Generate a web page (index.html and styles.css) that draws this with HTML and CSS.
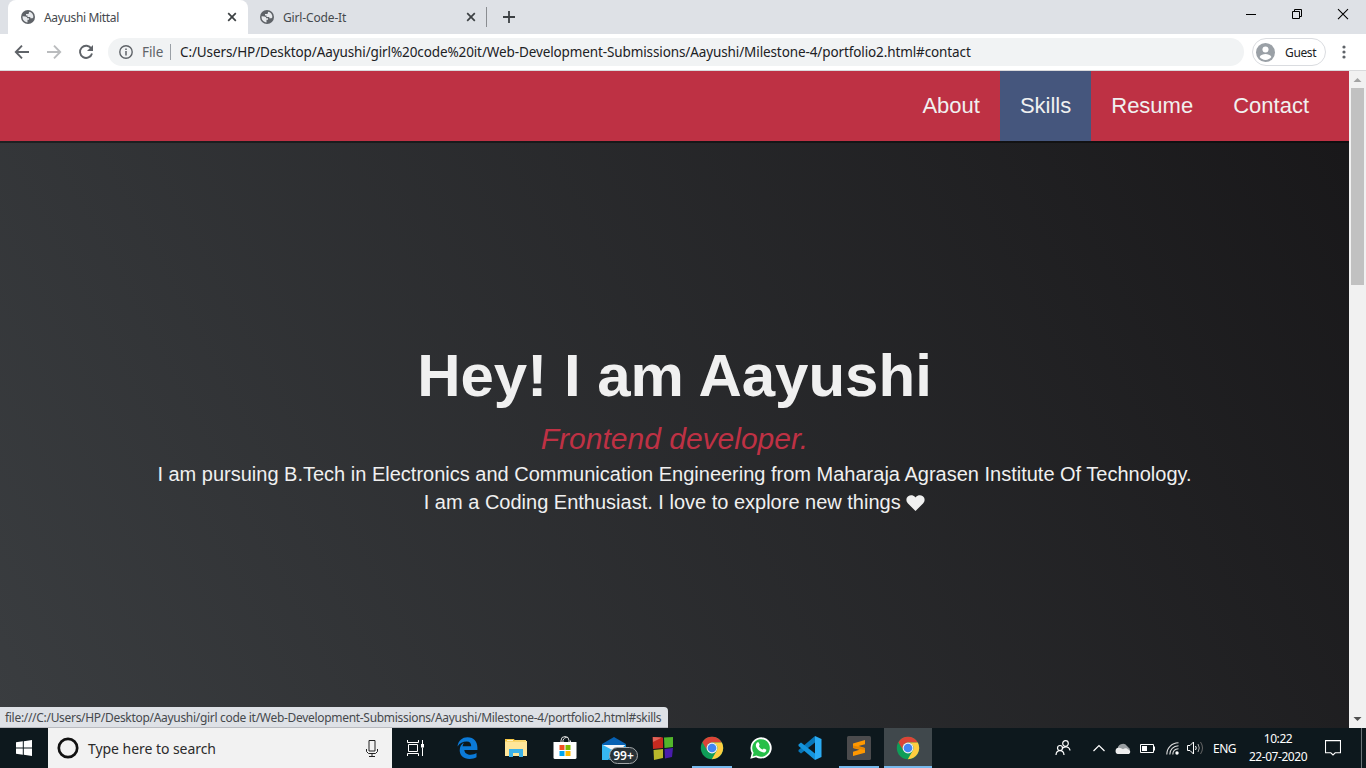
FILE: index.html
```html
<!DOCTYPE html>
<html lang="en">
<head>
<meta charset="utf-8">
<title>Aayushi Mittal</title>
<link rel="stylesheet" href="styles.css">
</head>
<body>
<svg class="defs" width="0" height="0" aria-hidden="true">
  <symbol id="globe" viewBox="0 0 14 14"><circle cx="7" cy="7" r="7" fill="#5f6368"/><path d="M1.600 6.300 4.500 6.400Q6.200 6.600 6.300 8.200H8V9.700H6.500V12.400C3.600 12.300 1.200 9.800 1.600 6.300ZM8 1.700C10.600 2 12.500 4.300 12.400 7.200L11.500 8.200H9.300V7.100H6.500V5.600H5V4.100H7.200L7.900 3.200Z" fill="#e8eaed"/></symbol>
  <symbol id="close" viewBox="0 0 10 10"><path d="M1.200 1.200l7.600 7.600M8.800 1.200 1.200 8.800" stroke="#3c4043" stroke-width="1.700"/></symbol>
  <symbol id="chrome" viewBox="0 0 24 24"><circle cx="12" cy="12" r="11.200" fill="#0f9d58"/><path d="M12 .8A11.200 11.200 0 0 1 21.800 6.600H12A5.400 5.400 0 0 0 7.300 14.700L2.400 6.200A11.200 11.200 0 0 1 12 .8Z" fill="#db4437"/><path d="M21.800 6.600A11.200 11.200 0 0 1 11.800 23.200L16.700 14.700A5.400 5.400 0 0 0 12 6.600Z" fill="#ffcd40"/><circle cx="12" cy="12" r="5.400" fill="#f1f1f1"/><circle cx="12" cy="12" r="4.300" fill="#4285f4"/></symbol>
</svg>
<div class="desktop">
  <header class="tabstrip">
    <div class="tab tab-active">
      <svg class="favicon"><use href="#globe"/></svg><span class="tab-title">Aayushi Mittal</span><svg class="tab-close"><use href="#close"/></svg>
    </div>
    <div class="tab">
      <svg class="favicon"><use href="#globe"/></svg><span class="tab-title tab-title-wide">Girl-Code-It</span><svg class="tab-close"><use href="#close"/></svg>
    </div>
    <div class="tab-divider"></div>
    <svg class="new-tab" viewBox="0 0 12 12"><path d="M6 0v12M0 6h12" stroke="#3c4043" stroke-width="1.800"/></svg>
    <div class="window-controls">
      <svg width="46" height="29" viewBox="0 0 46 29"><path d="M18 14.500h10" stroke="#000"/></svg>
      <svg width="46" height="29" viewBox="0 0 46 29"><path d="M18.500 11.500h7v7h-7zM20.500 11.500v-2h7v7h-2" fill="none" stroke="#000"/></svg>
      <svg width="46" height="29" viewBox="0 0 46 29"><path d="M18 9.200l10 10M28 9.200l-10 10" stroke="#000" stroke-width="1.100"/></svg>
    </div>
  </header>

  <div class="toolbar">
    <svg class="nav-icon" viewBox="0 0 16 16"><path d="M15 8H2M8 1.700 1.800 8 8 14.300" fill="none" stroke="#5f6368" stroke-width="1.900"/></svg>
    <svg class="nav-icon" viewBox="0 0 16 16"><path d="M1 8h13M8 1.700 14.200 8 8 14.300" fill="none" stroke="#babcbe" stroke-width="1.900"/></svg>
    <svg class="nav-icon" viewBox="0 0 16 16"><path d="M13.300 4.600A6.100 6.100 0 1 0 14 9.400" fill="none" stroke="#5f6368" stroke-width="1.900"/><path d="M15 1v6H9z" fill="#5f6368"/></svg>
    <div class="omnibox">
      <svg class="info" viewBox="0 0 14 14"><circle cx="7" cy="7" r="6.200" fill="none" stroke="#5f6368" stroke-width="1.400"/><path d="M7 6v4.500M7 3.400v1.500" stroke="#5f6368" stroke-width="1.500"/></svg>
      <span class="scheme">File</span><span class="scheme-line"></span>
      <span class="url">C:/Users/HP/Desktop/Aayushi/girl%20code%20it/Web-Development-Submissions/Aayushi/Milestone-4/portfolio2.html#contact</span>
    </div>
    <div class="profile">
      <svg width="19" height="19" viewBox="0 0 20 20"><circle cx="10" cy="10" r="10" fill="#9aa0a6"/><circle cx="10" cy="6.800" r="3.200" fill="#fff"/><path d="M3.800 14.800c1-2.400 4-3.200 6.200-3.200s5.200.8 6.200 3.200c-1.500 1.900-3.600 3-6.200 3s-4.700-1.100-6.200-3Z" fill="#fff"/></svg>
      <span>Guest</span>
    </div>
    <svg class="more" viewBox="0 0 4 14"><g fill="#5f6368"><circle cx="2" cy="2" r="1.600"/><circle cx="2" cy="7" r="1.600"/><circle cx="2" cy="12" r="1.600"/></g></svg>
  </div>

  <main class="viewport">
    <div class="page">
      <nav class="navbar">
        <a>About</a><a class="hovered">Skills</a><a>Resume</a><a>Contact</a>
      </nav>
      <section class="welcome">
        <h1>Hey! I am Aayushi</h1>
        <p class="subtitle">Frontend developer.</p>
        <p class="bio">I am pursuing B.Tech in Electronics and Communication Engineering from Maharaja Agrasen Institute Of Technology.</p>
        <p class="bio">I am a Coding Enthusiast. I love to explore new things <svg class="heart" viewBox="0 0 20 17"><path d="M10 17 2 9C-.4 6.500-.1 3 2.200 1.300 4.600-.5 7.800.1 9.600 2.100L10 2.600l.4-.5C12.200.1 15.400-.5 17.800 1.300 20.100 3 20.400 6.500 18 9Z" fill="#f0f0f0"/></svg></p>
      </section>
    </div>
    <div class="scrollbar">
      <svg width="17" height="17" viewBox="0 0 17 17"><path d="M4.500 11 8.500 7l4 4z" fill="#a3a3a3"/></svg>
      <div class="thumb"></div>
      <svg class="arrow-down" width="17" height="17" viewBox="0 0 17 17"><path d="M4.500 6 8.500 10l4-4z" fill="#505050"/></svg>
    </div>
    <div class="status">file:///C:/Users/HP/Desktop/Aayushi/girl code it/Web-Development-Submissions/Aayushi/Milestone-4/portfolio2.html#skills</div>
  </main>

  <footer class="taskbar">
    <div class="start"><svg width="16" height="16" viewBox="0 0 16 16"><path d="M0 2.300 6.800 1.300V7.500H0zM7.800 1.200 16 0v7.500H7.800zM0 8.500h6.800v6.200L0 13.700zM7.800 8.500H16V16l-8.200-1.200z" fill="#fff"/></svg></div>
    <div class="search">
      <svg width="22" height="22" viewBox="0 0 22 22"><circle cx="11" cy="11" r="9.200" fill="none" stroke="#111" stroke-width="2.700"/></svg>
      <span>Type here to search</span>
      <svg class="mic" width="12" height="17" viewBox="0 0 12 17"><path d="M3 .5h6v10.500H3zM.5 9v2.500l2 2h7l2-2V9M6 13.500v3M3 16.500h6" fill="none" stroke="#222"/></svg>
    </div>
    <div class="apps">
      <div class="app taskview"><svg width="18" height="16" viewBox="0 0 18 16"><path d="M.5 0v2.500h11V0M.5 16v-2.500h11V16M1.500 4.500h9v7h-9zM15.500 0v4M15.500 7.500V16" fill="none" stroke="#fff"/><path d="M14 4h3v3.500h-3z" fill="#fff"/></svg></div>
      <div class="app"><svg width="21" height="22" viewBox="0 0 21 22"><path d="M.5 9.500C1.200 3.700 5.200.3 10.500.3 17 .3 20.400 4.800 20.400 10.500V13H7.300c.2 3.200 3 4.700 6.300 4.700 2.300 0 4.200-.6 5.900-1.700v4.300c-2 1.100-4.200 1.600-6.900 1.600-6.200 0-9.900-3.600-9.900-8.700 0-3.400 1.700-6.100 4.600-7.600-1 1.100-1.500 2.200-1.700 3.700h8.600c0-2.700-1.300-4.700-4.400-4.700C5.800 4.600 2.700 6.500.5 9.500Z" fill="#0b7ad8"/></svg></div>
      <div class="app"><svg width="22" height="18" viewBox="0 0 22 18"><path d="M0 1h21v1h1v15H0z" fill="#ffe699"/><path d="M0 0h9l1 1.500H21V2.500H0z" fill="#f6c744"/><path d="M2 1h6v1H2z" fill="#fff3c4"/><path d="M4 18v-8h14v8h-4v-4H8v4z" fill="#3cb2e8"/></svg></div>
      <div class="app"><svg width="24" height="24" viewBox="0 0 24 24"><path d="M8 6V4.500a4 4 0 0 1 8 0V6M10 6V4.500a4 4 0 0 1 5-3M17.500 6V4.500" fill="none" stroke="#ddd"/><path d="M.5 6h23v15.500q0 1.500-1.500 1.500H2Q.5 23 .5 21.500Z" fill="#fff"/><path d="M6.500 9h5v5h-5z" fill="#f25022"/><path d="M12.500 9h5v5h-5z" fill="#7fba00"/><path d="M6.500 15h5v5h-5z" fill="#00a4ef"/><path d="M12.500 15h5v5h-5z" fill="#ffb900"/></svg></div>
      <div class="app mail"><svg width="24" height="23" viewBox="0 0 24 23"><path d="M0 7 12 0l12 7v5H0z" fill="#0761b3"/><path d="M1 8h22v8H1z" fill="#f3f6f9"/><path d="M0 7.500 14 15 6 23H0z" fill="#36b7f2"/><path d="M24 7.500V23H6z" fill="#1595dc"/></svg><span class="badge">99+</span></div>
      <div class="app"><svg width="22" height="24" viewBox="0 0 22 24"><path d="M.5 1 11 1.500V12L1 13z" fill="#c52a20"/><path d="M12 1.500 21 1v10l-8.500 1z" fill="#52b62b"/><path d="M1.500 14 11 13v9l-9 2z" fill="#b8b82b"/><path d="M12.500 13l8.500-1-1 9-7 1.500z" fill="#491cac"/><path d="M1 1l9 .5L1 6z" fill="#df6459"/></svg></div>
      <div class="app running"><svg width="24" height="24"><use href="#chrome"/></svg></div>
      <div class="app"><svg width="22" height="22" viewBox="0 0 22 22"><path d="M.3 21.700 1.800 16A10.600 10.600 0 1 1 6 20.200Z" fill="#fff"/><path d="M2.500 19.500 3.600 15.700A8.800 8.800 0 1 1 6.500 18.500Z" fill="#26bf49"/><path d="M7.200 5.600c.5-.5 1.300-.5 1.600.1l.9 2c.1.300-.8 1.300-.8 1.500.8 1.600 2 2.700 3.600 3.400.3 0 1.100-1.300 1.400-1.200l2.100 1c.7.4.1 2-.6 2.500-1.400 1-3.400.4-5.300-.7-2-1.200-3.600-3.200-4.100-4.800-.4-1.400.2-2.900 1.200-3.800Z" fill="#fff"/></svg></div>
      <div class="app"><svg width="24" height="24" viewBox="0 0 24 24"><path d="M17 0v6.500L3 17.500.5 15.500v-1.500z" fill="#0877b9"/><path d="M.5 8.500 3 6.500l14 11V24L.5 10z" fill="#1494dc"/><path d="M17 0 23.500 3v18L17 24z" fill="#2aabf3"/></svg></div>
      <div class="app running"><svg width="24" height="24" viewBox="0 0 24 24"><rect width="24" height="24" rx="1.500" fill="#4b4b4d"/><path d="M6 7.500 18 4v4.200L11.500 10 18 12v4.700L6 20v-4.200l6.500-2L6 12z" fill="#ff9800"/><path d="M6 9.500 18 12v2L6 12z" fill="#e68500"/></svg></div>
      <div class="app running current"><svg width="24" height="24"><use href="#chrome"/></svg></div>
    </div>
    <div class="tray">
      <svg class="people" width="16" height="16" viewBox="0 0 16 16"><g fill="none" stroke="#fff" stroke-width="1.200"><circle cx="10.500" cy="3.500" r="2.800"/><circle cx="5" cy="8" r="2.500"/><path d="M1 15c.2-3 2-4.300 4-4.300S8.800 12 9 15M8 8c2-2 6.500-1.500 7 2.500"/></g></svg>
      <svg class="chevron" width="12" height="8" viewBox="0 0 12 8"><path d="M.5 7 6 1.500 11.500 7" fill="none" stroke="#fff" stroke-width="1.200"/></svg>
      <svg class="cloud" width="17" height="11" viewBox="0 0 17 11"><path d="M3 7a5 5 0 0 1 9-4l3 3-2 4z" fill="#9a9fa2"/><path d="M3 11a3.200 3.200 0 0 1 .5-6.300c1.800-.2 3 .6 4.500 1.500 2-1.500 4-1 5 .3A2.400 2.400 0 0 1 14 11Z" fill="#eee"/></svg>
      <svg class="battery" width="15" height="9" viewBox="0 0 15 9"><path d="M.5.5h13v8H.5z" fill="none" stroke="#fff"/><path d="M2 2h5v5H2zM14 2.500h1v4h-1z" fill="#fff"/></svg>
      <svg class="wifi" width="13" height="13" viewBox="0 0 13 13"><g fill="none" stroke="#ddd" stroke-width="1.100"><path d="M.8 12.500C.8 6 5.500 1 12.500.8M3.800 12.500c0-5 3.500-8.500 8.700-8.700M6.800 12.500c0-3.300 2.200-5.500 5.700-5.700"/></g><circle cx="11" cy="11" r="1.700" fill="#fff"/></svg>
      <svg class="volume" width="17" height="14" viewBox="0 0 17 14"><path d="M.5 4.500H3L6.500 1v12L3 9.500H.5z" fill="none" stroke="#fff"/><path d="M8.500 5q1.500 2 0 4" fill="none" stroke="#fff"/><path d="M11 3q2.500 4 0 8" fill="none" stroke="#aaa"/><path d="M13.500 1q4 6 0 12" fill="none" stroke="#666"/></svg>
      <span class="lang">ENG</span>
      <div class="clock"><span>10:22</span><span class="date">22-07-2020</span></div>
      <svg class="notice" width="16" height="16" viewBox="0 0 16 16"><path d="M.5.600h15v12.200h-5.300L8 15 5.800 12.800H.5z" fill="none" stroke="#fff" stroke-width="1.100"/></svg>
      <div class="peek"></div>
    </div>
  </footer>
</div>
</body>
</html>
```
FILE: styles.css
```css
* { box-sizing: border-box; }
body { margin: 0; overflow: hidden; font-family: "Noto Sans", "Open Sans", sans-serif; }
svg { display: block; flex: none; }
.defs { position: absolute; }
.desktop { width: 1366px; height: 768px; display: flex; flex-direction: column; }

.tabstrip { height: 34px; background: #dee1e6; display: flex; align-items: center; padding-left: 8px; }
.tab { width: 239px; height: 34px; display: flex; align-items: center; padding: 0 11px 0 12px; font-size: 12px; color: #45494d; }
.tab-active { width: 240px; padding: 0 11px 0 13px; background: #fff; border-radius: 8px 8px 0 0; }
.favicon { width: 14px; height: 14px; }
.tab-title { flex: 1; margin-left: 9px; letter-spacing: -.35px; white-space: nowrap; }
.tab-title-wide { letter-spacing: -.15px; }
.tab-close { width: 10px; height: 10px; }
.tab-divider { width: 1px; height: 20px; background: #8a8d91; margin-left: -1px; }
.new-tab { width: 12px; height: 12px; margin-left: 16px; }
.window-controls { display: flex; margin-left: auto; height: 34px; }

.toolbar { height: 37px; background: #fff; border-bottom: 1px solid #d9dadc; display: flex; align-items: center; padding-left: 14px; }
.nav-icon { width: 16px; height: 16px; margin-right: 16px; }
.omnibox { width: 1136px; height: 28px; margin-left: -2px; border-radius: 14px; background: #f1f3f4; display: flex; align-items: center; padding-left: 11px; font-size: 13.500px; color: #202124; }
.info { width: 14px; height: 14px; }
.scheme { margin-left: 9px; width: 28px; color: #5f6368; letter-spacing: -.1px; }
.scheme-line { width: 1px; height: 16px; background: #9aa0a6; }
.url { margin-left: 9px; white-space: nowrap; letter-spacing: -.11px; }
.profile { width: 74px; height: 28px; margin-left: 8px; border: 1px solid #dadce0; border-radius: 14px; display: flex; align-items: center; padding-left: 3px; font-size: 12px; color: #202124; }
.profile span { margin-left: 10px; letter-spacing: -.35px; }
.more { width: 4px; height: 14px; margin-left: 16px; }

.viewport { height: 657px; display: flex; position: relative; }
.page { width: 1349px; height: 657px; display: flex; flex-direction: column; background: linear-gradient(62deg, #3a3d40 0%, #181719 100%); font-family: "Liberation Sans", Arial, sans-serif; color: #f0f0f0; }
.navbar { height: 70px; background: #be3144; box-shadow: 0 2px 0 rgba(0, 0, 0, .4); display: flex; justify-content: flex-end; padding-right: 20px; font-size: 22px; }
.navbar a { padding: 22px 20px; line-height: 25px; }
.navbar .hovered { background: #45567d; }
.welcome { display: flex; flex-direction: column; align-items: center; padding-top: 200px; }
.welcome h1 { margin: 0; font-size: 60px; line-height: 70px; }
.welcome p { margin: 0; white-space: nowrap; }
.welcome .subtitle { margin-top: 10px; font-size: 30px; line-height: 36px; font-style: italic; color: #be3144; }
.bio { font-size: 20px; line-height: 28px; }
.welcome .subtitle + .bio { margin-top: 3px; }
.heart { display: inline-block; width: 19px; height: 16px; vertical-align: -2px; }

.scrollbar { width: 17px; background: #f1f1f1; display: flex; flex-direction: column; }
.thumb { width: 13px; height: 197px; margin-left: 2px; background: #c1c1c1; }
.arrow-down { margin-top: auto; }
.status { position: absolute; left: 0; bottom: 0; width: 668px; height: 21px; padding: 0 5px; background: #dee1e6; border-bottom: 1px solid #b9bbc0; border-radius: 0 4px 0 0; font-size: 12px; line-height: 21px; letter-spacing: -.303px; color: #46494d; white-space: nowrap; }

.taskbar { height: 40px; display: flex; background: #0d181d; color: #fff; }
.start { width: 48px; display: flex; align-items: center; justify-content: center; }
.search { width: 344px; background: #f2f2f2; display: flex; align-items: center; padding: 0 14px 0 9px; font-size: 14px; color: #2b2b2b; }
.search span { margin-left: 9px; flex: 1; letter-spacing: -.05px; }
.apps { display: flex; gap: 1px; }
.app { width: 48px; height: 40px; display: flex; align-items: center; justify-content: center; position: relative; }
.taskview { margin-right: 2px; }
.running::after { content: ""; position: absolute; left: 4px; right: 4px; bottom: 0; height: 2px; background: #76b9ed; }
.current { background: #40484c; }
.current::after { left: 0; right: 0; }
.badge { position: absolute; left: 19px; top: 19px; width: 29px; height: 17px; border: 1px solid #a3a7a9; border-radius: 9px; background: #283136; font-size: 12px; font-weight: 600; line-height: 15px; text-align: center; }
.tray { flex: 1; display: flex; align-items: center; padding-left: 123px; font-size: 12px; }
.chevron { margin-left: 22px; }
.cloud { margin-left: 10px; }
.battery { margin-left: 8px; }
.wifi { margin-left: 11px; }
.volume { margin-left: 8px; }
.lang { margin-left: 9px; width: 24px; font-size: 12px; letter-spacing: -.5px; }
.clock { width: 60px; margin-left: 11px; display: flex; flex-direction: column; align-items: center; line-height: 18px; font-size: 12px; letter-spacing: -.45px; }
.notice { margin-left: 17px; }
.peek { width: 1px; height: 40px; margin-left: auto; margin-right: 4px; background: #6b7478; }
```
